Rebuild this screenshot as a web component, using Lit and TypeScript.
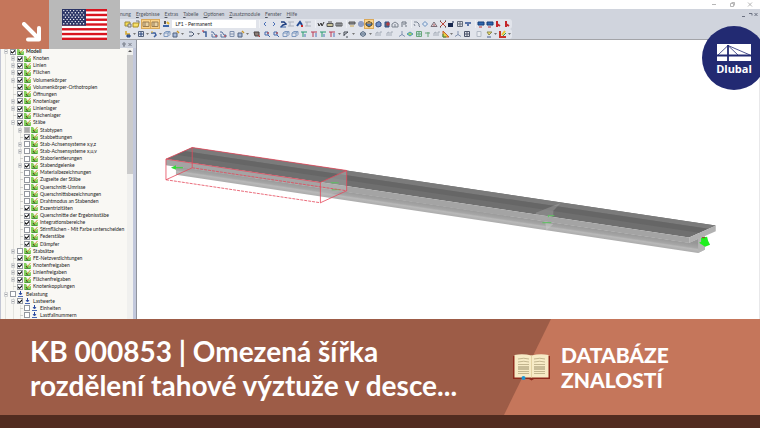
import { LitElement, html, svg, css, nothing } from "lit";
import { customElement } from "lit/decorators.js";
import { styleMap } from "lit/directives/style-map.js";

type Row = [level: number, label: string, state: 0 | 1 | 2, expander: "" | "+" | "-", load?: boolean];

const ROWS: Row[] = [
  [0, "Modell", 1, "-"],
  [1, "Knoten", 1, "+"],
  [1, "Linien", 1, "+"],
  [1, "Flächen", 1, "+"],
  [1, "Volumenkörper", 1, "+"],
  [1, "Volumenkörper-Orthotropien", 1, ""],
  [1, "Öffnungen", 1, ""],
  [1, "Knotenlager", 1, "+"],
  [1, "Linienlager", 1, "+"],
  [1, "Flächenlager", 1, ""],
  [1, "Stäbe", 1, "-"],
  [2, "Stabtypen", 2, "+"],
  [2, "Stabbettungen", 1, ""],
  [2, "Stab-Achsensysteme x,y,z", 0, "+"],
  [2, "Stab-Achsensysteme x,u,v", 0, "+"],
  [2, "Staborientierungen", 0, ""],
  [2, "Stabendgelenke", 1, "+"],
  [2, "Materialbezeichnungen", 0, ""],
  [2, "Zugseite der Stäbe", 0, ""],
  [2, "Querschnitt-Umrisse", 0, ""],
  [2, "Querschnittsbezeichnungen", 0, ""],
  [2, "Drahtmodus an Stabenden", 0, ""],
  [2, "Exzentrizitäten", 1, ""],
  [2, "Querschnitte der Ergebnisstäbe", 1, ""],
  [2, "Integrationsbereiche", 1, ""],
  [2, "Stirnflächen - Mit Farbe unterscheiden", 0, ""],
  [2, "Federstäbe", 1, ""],
  [2, "Dämpfer", 1, ""],
  [1, "Stabsätze", 0, "+"],
  [1, "FE-Netzverdichtungen", 1, ""],
  [1, "Knotenfreigaben", 1, "+"],
  [1, "Linienfreigaben", 1, "+"],
  [1, "Flächenfreigaben", 1, "+"],
  [1, "Knotenkopplungen", 1, ""],
  [0, "Belastung", 0, "-", true],
  [1, "Lastwerte", 1, "-", true],
  [2, "Einheiten", 0, "", true],
  [2, "Lastfallnummern", 0, "", true],
];

const MENU = ["nung", "Ergebnisse", "Extras", "Tabelle", "Optionen", "Zusatzmodule", "Fenster", "Hilfe"];

const p = (d: string, stroke: string, width = 1, fill = "none") =>
  svg`<path d=${d} stroke=${stroke} stroke-width=${width} fill=${fill}></path>`;

const ICONS: Record<string, unknown> = {
  bulb: [p("M1 2h5v4H1z", "#9c8a3d", 1, "#f6dd52"), p("M4 4h3v3H4z", "#777", 1, "#ddd")],
  folder: [p("M1 3h6l-1 4H1z", "#a98d25", 1, "#f8e26b"), p("M4 1h3v2", "#777")],
  win: [p("M1 2h6v4.500H1z", "#9a7d52", 1, "#e9d3a6"), p("M3 2v4", "#9a7d52")],
  user: [p("M3 1v3", "#222", 1.5), p("M1 6h6", "#3b64a8", 2), p("M5 2l2 2", "#e2b32c", 2)],
  left: [p("M5 2L3 4l2 2", "#4a6fb5", 1)],
  right: [p("M3 2l2 2-2 2", "#4a6fb5", 1)],
  blue: [p("M2 2h3l2 2-3 1-2 2", "#1f3f80", 1.5), p("M1 7h6", "#3b64a8", 1)],
  ghost: [p("M1 2h6M1 6h6M3 2v4", "#aab0bb", 1)],
  mark: [p("M1 6l3-4 2 3", "#234a91", 2), p("M5 6h2", "#cc2a2a", 2)],
  glasses: [p("M1 3l1 3 2-3 1 3 2-4", "#333", 1)],
  box: [p("M1 3.500h6v3H1z", "#555", 1, "#cbc59a"), p("M2 2h4", "#555", 1)],
  grid: [p("M1 3h6v3H1z", "#555", 1, "#c5ccd8"), p("M3 3v3M5 3v3", "#555", 1)],
  table: [p("M1 2h6v2H1z", "#555", 1, "#8e9095"), p("M2 6h4", "#c9a44b", 1)],
  gear: [p("M2 2h4v4H2z", "#7787b3", 1, "#dfe4f4"), p("M4 1v6M1 4h6", "#7787b3", 1)],
  cube: [p("M2 3l3-1.500 2 1.500v3L4 7 2 6z", "#334f86", 1, "#718fc2")],
  cubeHot: [p("M1 3l3-1.500 3 1.500v2L4 7 1 5z", "#5b4a22", 1, "#4e78b8"), p("M2 3h4", "#eca02b", 1)],
  cubeRed: [p("M2 2h4v5H2z", "#334f86", 1, "#567"), p("M4 3h2v2H4z", "#c33", 1)],
  house: [p("M1 7V4l3-2 3 2v3zM4 4v3", "#7d848f", 1)],
  flag: [p("M2 7V2h4v2H3M5 6h2", "#6d7480", 1)],
  curve: [p("M1 2h3l2 2v2l1 1", "#7c8593", 1), p("M1 4l1 2", "#7c8593", 1)],
  ring: [p("M4 1.500L6.500 4 4 6.500 1.500 4z", "#688dbd", 1, "#dfe9f5")],
  tri: [p("M1 6.500L4 2l3 4.500z", "#7b6d77", 1), p("M4 4v2", "#b55", 1)],
  cross: [p("M1 1l6 6M7 1L1 7", "#b9493d", 1), p("M1 1h1M6 1h1M1 7h1M6 7h1", "#333", 1)],
  ball: [p("M2 4h3v2H2z", "#16264d", 2, "#16264d"), p("M5 2h2", "#16264d", 1)],
  target: [p("M1.500 1.500h5v5h-5z", "#666e7c", 1), p("M3 3h2v2H3z", "#666e7c", 1)],
  mol: [p("M1 3h6M4 3v3", "#5974a8", 2)],
  screen: [p("M1 2h6v3H1z", "#133d78", 1, "#2c66ae"), p("M2 7h3", "#b33", 1)],
  pdf: [p("M3 1v6M3 4l3 2", "#c3262a", 2)],
  node: [p("M2 1v3h4", "#d5a72d", 1.5), p("M3 5h3v2H3z", "#27457d", 1, "#4970b5")],
  frame: [p("M1.500 1.500h5v5h-5z", "#53627f", 1, "#e5e9f2"), p("M3 3h2v2H3z", "#27457d", 1)],
  swirl: [p("M1 3h4l1 2-2 2", "#3c5f9e", 1.5), p("M1 2h2", "#ddb132", 1)],
  cubeLt: [p("M1 3l2-1.500h4v3L5 6.500H1zM1 3h4v3M5 3l2-1.500", "#7c98bf", 1)],
  edit: [p("M1 3h4v4H1z", "#53627f", 1, "#a7bada"), p("M5 1l2 2", "#c9962b", 1.5)],
  beam: [p("M1 2h3l2 2-2 2H1", "#4d5a72", 1)],
  post: [p("M2 2h3v5", "#3e5f9a", 1.5), p("M1 1h2", "#c33", 1)],
  roof: [p("M1 2h2l2 3h2v2H2V4", "#55709e", 1), p("M5 6h2", "#c33", 1)],
  line: [p("M2 1.500h4v5H2zM2 4h4", "#8091ae", 1)],
  cam: [p("M1 2h5v4H2z", "#464141", 1, "#8d7f79"), p("M5 5l2 2", "#b33", 1)],
  zoom: [p("M2 2h3v3H2zM5 5l2 2", "#4268ab", 1), p("M4 3h2", "#bb3030", 1)],
  axisG: [p("M1 2h6M3 2v5", "#279a70", 1), p("M5 4v3", "#4e72b9", 1)],
  axisR: [p("M1 2h6M3 2v5", "#ba3a55", 1), p("M6 3v4", "#4e72b9", 1)],
  graph: [p("M2 6V2h4M2 5l4-3M4 7h2", "#454a53", 1)],
  globe: [p("M4 1.500L6.500 3v2L4 6.500 1.500 5V3zM2 4h4", "#5d7087", 1, "#afbccc")],
  wave: [p("M1 6V3l2-1v4M5 6V2h2", "#a6adb8", 1)],
  load: [p("M4 1v4M1 6.500l3-2 3 2", "#8393b0", 1)],
  diamond: [p("M1 4l3-2 3 2-3 2z", "#4c9cb8", 1, "#a3cf64")],
  mesh: [p("M1.500 1.500h5v5h-5zM4 2v4M2 4h4", "#69a578", 1, "#c5e0e9")],
  green: [p("M1 3h5M4 2v5", "#68a57a", 1)],
  color: [p("M1 1v6h6z", "#c75b2b", 1, "#e9ce41"), p("M1 4v3h3", "#37a04c", 1)],
  tiles: [p("M1.500 1.500h5v5h-5zM4 1.500v5M1.500 4h5", "#4a5268", 1)],
  disk: [p("M2 1.500h4v5H2z", "#b3bac5", 1, "#e8ebf0")],
  lamp: [p("M2 2h5L4 5z", "#8a8a51", 1, "#f2df67"), p("M2 7h4", "#445b8c", 1)],
  rainbow: [p("M1 1v6h6", "#c93429", 2), p("M3 5l3-4", "#e8c530", 2), p("M4 6l3-3", "#38994c", 1)],
};

/* Each group is [relative width, names]; "v" is a drop-down caret, a leading * marks a pressed tool. */
type Group = [number, string];
const FILE_TOOLS: Group[] = [[16, "bulb folder"], [17, "*win *win"], [8, "user"]];
const VIEW_TOOLS: Group[] = [
  [53, "left right blue ghost mark ghost"],
  [27, "glasses box grid"],
  [62, "table gear *cubeHot cube cubeRed house flag"],
  [62, "curve ring tri cross ball target mol"],
  [35, "screen screen pdf pdf"],
];
const EDIT_TOOLS: Group[] = [
  [60, "node v frame v swirl v cubeLt edit v"],
  [62, "beam v post roof roof line edit v"],
  [102, "cam zoom zoom cubeLt cubeLt axisG axisR axisG axisR v graph v"],
  [35, "globe v wave wave"],
  [74, "load diamond mesh green wave color v load tiles"],
  [36, "disk lamp v rainbow v"],
];

const reset = css`
  :host { display: block; box-sizing: border-box; font-family: Lato, "Liberation Sans", sans-serif; }
  *, *::before { box-sizing: border-box; }
  svg { display: block; }
  button { border: 0; padding: 0; margin: 0; background: none; font: inherit; color: inherit; }
`;

@customElement("tool-bars")
export class ToolBars extends LitElement {
  static styles = [reset, css`
    :host { background: #d0d4dd; padding-left: 120px; height: 31px; border-bottom: 1px solid #a3a4a8; position: relative; }
    nav { display: flex; gap: 5px; height: 10px; align-items: center; color: #50545e; font-size: 5px; line-height: 10px; }
    nav button::first-letter { text-decoration: underline; }
    nav button:first-child::first-letter { text-decoration: none; }
    .bar { display: flex; align-items: center; height: 10px; width: 392px; background: #e1e4eb; border-radius: 0 3px 3px 0; gap: 3px; padding: 0 1px 0 4px; }
    .bar + .bar { gap: 4px; }
    .group { display: flex; justify-content: space-between; flex: 1 1 0; min-width: 0; }
    select ~ .group { padding-left: 1px; border-left: 1px solid #eef0f4; }
    .tool { width: 8px; height: 8px; flex: none; }
    .tool.on { background: #fbd38a; outline: 1px solid #dba95a; }
    .caret { width: 3px; align-self: center; flex: none; }
    select { appearance: none; width: 84px; flex: none; height: 8px; border: 0; padding: 0 3px; background: #fff; color: #222; font: 5px/8px Lato, "Liberation Sans", sans-serif; }
    .mdi { position: absolute; right: 2px; top: 3px; }
  `];

  private group([width, names]: Group) {
    return html`<div class="group" style=${styleMap({ flexGrow: String(width) })}>
      ${names.split(" ").map((n) => {
        if (n === "v") return html`<svg class="caret" viewBox="0 0 3 2"><path d="M0 0h3L1.500 2z" fill="#777"></path></svg>`;
        const on = n[0] === "*";
        const key = on ? n.slice(1) : n;
        return html`<button class="tool ${on ? "on" : ""}" aria-label=${key}><svg viewBox="0 0 8 8">${ICONS[key]}</svg></button>`;
      })}
    </div>`;
  }

  render() {
    return html`
      <nav>${MENU.map((m) => html`<button>${m}</button>`)}</nav>
      <div class="bar">
        ${FILE_TOOLS.map((g) => this.group(g))}
        <select aria-label="Lastfall"><option>LF1 - Permanent</option></select>
        ${VIEW_TOOLS.map((g) => this.group(g))}
      </div>
      <div class="bar">${EDIT_TOOLS.map((g) => this.group(g))}</div>
      <svg class="mdi" width="16" height="6" viewBox="0 0 16 6" fill="none" stroke="#6b7080">
        <path d="M0 4.500h3M7 1.500h3v2M12.500 1l3 3M15.500 1l-3 3"></path>
      </svg>`;
  }
}

@customElement("model-tree")
export class ModelTree extends LitElement {
  static styles = [reset, css`
    :host { display: flex; flex-direction: column; width: 137px; flex: none; background: #f9f8f4; border-right: 1px solid #8f939c; min-height: 0; }
    header { display: flex; justify-content: flex-end; align-items: center; height: 8px; flex: none; padding-right: 4px; background: #cdd3df; }
    .body { display: flex; flex: 1; min-height: 0; border-left: 1px solid #c3c6d4; border-right: 3px solid #c2c8dc; }
    ul { list-style: none; margin: 0; padding: 0; flex: 1; display: grid; grid-auto-rows: 1fr; min-width: 0; }
    li { display: flex; align-items: center; min-height: 0; padding-left: 2px; font-size: 5px; line-height: 7px; color: #222; white-space: nowrap;
      background: linear-gradient(#e4e4df, #e4e4df) 4px 0 / 1px 100% no-repeat; }
    .l1 { padding-left: 9px; background: linear-gradient(#e4e4df, #e4e4df) 4px 0 / 1px 100% no-repeat, linear-gradient(#e4e4df, #e4e4df) 12px 0 / 1px 100% no-repeat; }
    .l2 { padding-left: 16px; background: linear-gradient(#e4e4df, #e4e4df) 4px 0 / 1px 100% no-repeat, linear-gradient(#e4e4df, #e4e4df) 12px 0 / 1px 100% no-repeat, linear-gradient(#e4e4df, #e4e4df) 19px 0 / 1px 100% no-repeat; }
    .exp { width: 6px; height: 5px; flex: none; margin-right: 1px; }
    label { display: flex; align-items: center; gap: 1px; }
    .root { font-weight: bold; }
    input { appearance: none; margin: 0; width: 6px; height: 6px; border: 1px solid #94989f; background: #fff; flex: none; }
    input:checked::before { content: ""; display: block; height: 4px; background: #111; clip-path: polygon(0 35%, 40% 65%, 100% 0, 100% 45%, 40% 100%, 0 80%); }
    .mixed { background: #aaa; border-color: #bbb; }
    .pic { width: 7px; height: 6px; flex: none; margin-right: 1px; }
    .scroll { width: 6px; flex: none; background: #f0f0ee; display: flex; flex-direction: column; }
    .up { width: 6px; height: 7px; }
    .thumb { height: 44%; background: #cbcbcb; }
  `];

  render() {
    return html`
      <header><svg width="10" height="5" viewBox="0 0 10 5" fill="none" stroke="#777c88"><path d="M1 1h2v2H1zM2 3v2M6.500 1l3 3M9.500 1l-3 3"></path></svg></header>
      <div class="body">
        <ul>${ROWS.map(([level, label, state, exp, load]) => html`
          <li class="l${level}">
            <svg class="exp" viewBox="0 0 6 5" fill="none">
              ${exp
                ? svg`<path d="M1.500 .5h3v4h-3z" stroke="#cfd0d2" fill="#f3f3f0"></path><path d=${exp === "+" ? "M2 2.500h2M3 1.500v2" : "M2 2.500h2"} stroke="#a2a4a8"></path>`
                : level ? svg`<path d="M3 2.500h3" stroke="#d0d0cc"></path>` : nothing}
            </svg>
            <label class=${label === "Modell" ? "root" : ""}>
              <input type="checkbox" class=${state === 2 ? "mixed" : ""} .checked=${state === 1}>
              <svg class="pic" viewBox="0 0 7 6" fill="none">
                ${load
                  ? svg`<path d="M3.500 0v3M2 2l1.500 2L5 2" stroke="#2747a0"></path><path d="M1 5.500h5" stroke="#4a69b5"></path>`
                  : svg`<path d="M0 0h2l2 3 3-1v4H0z" fill="#86d05e"></path><path d="M1 5.500h5" stroke="#4e9a3f"></path><path d="M3 4l3.500-4" stroke="#c8962f"></path><path d="M2 3l1.500 2" stroke="#3a4a24"></path>`}
              </svg>
              <span>${label}</span>
            </label>
          </li>`)}
        </ul>
        <div class="scroll"><svg class="up" viewBox="0 0 6 7"><path d="M1 4l2-2 2 2z" fill="#555"></path></svg><div class="thumb"></div></div>
      </div>`;
  }
}

@customElement("beam-view")
export class BeamView extends LitElement {
  static styles = [reset, css`
    :host { flex: 1; min-width: 0; background: #fff; border-right: 1px solid #e8e8ea; overflow: hidden; }
    svg { width: 100%; }
  `];

  render() {
    return html`<svg viewBox="137 40 623 279" role="img" aria-label="Träger">
      <defs>
        <linearGradient id="web" gradientUnits="userSpaceOnUse" x1="400" y1="199" x2="398.500" y2="209">
          <stop offset="0" stop-color="#979797"></stop><stop offset=".45" stop-color="#a6a6a6"></stop><stop offset=".6" stop-color="#b9b9b9"></stop><stop offset="1" stop-color="#a9a9a9"></stop>
        </linearGradient>
      </defs>
      <path d="M176 166.500L690 243l9-4 6.700-2v13l-6.700 3.300L176 175z" fill="url(#web)"></path>
      <path d="M699 239l6.700-3v14l-6.700 3.300z" fill="#b4b4b4"></path>
      <path d="M166 159.300L192.300 147.700 716.700 225.700 690 237.700z" fill="#6f6f6f"></path>
      <path d="M192.300 147.700L716.700 225.700 709 229 184 151.300z" fill="#7b7b7b"></path>
      <path d="M184 151.300L709 229 700 233 176 155z" fill="#666"></path>
      <path d="M166 159.300L690 237.700v5.600L166 165.500z" fill="#a4a4a4"></path>
      <path d="M690 237.700l26.700-12v5.800l-26.700 11.800z" fill="#b1b1b1"></path>
      <path d="M554 211l7.700-8L536.500 213v6l10 1.500 7.500-4z" fill="#aaa" fill-opacity=".4"></path>
      <path d="M546 223l8 1.200-7 6.500z" fill="#ccc" fill-opacity=".5"></path>
      <path d="M320.700 182.700L347 170.700v20l-26.300 6z" fill="#bbb" fill-opacity=".4"></path>
      <path d="M171 168l5-2.500v2h7v1h-7v1.500z" fill="#2fdc32"></path>
      <path d="M331 183h8M332 190h8M549 216h6M543 223h9M549 215.500v2" stroke="#5bc45e" fill="none"></path>
      <path d="M702 238l6-1 1 4 2 4-5 2-6-4 2-1z" fill="#20ef20"></path>
      <path d="M703 238h3" stroke="#914322"></path>
      <path d="M192.300 147.700L347 170.700 320.700 182.700 166 159.300zM166 159.300V180M192.300 147.700V168M347 170.700V191M320.700 182.700V203M166 180l26.300-12M320.700 203L347 191" fill="none" stroke="#e4475a" stroke-width=".8"></path>
      <path d="M166 180L320.700 203M192.300 168L347 191" fill="none" stroke="#e4475a" stroke-width=".8" stroke-dasharray="3 1"></path>
    </svg>`;
  }
}

@customElement("app-root")
export class AppRoot extends LitElement {
  static styles = [reset, css`
    :host { display: flex; flex-direction: column; height: 100vh; position: relative; overflow: hidden; background: #fff; }
    .titlebar { height: 9px; flex: none; display: flex; justify-content: flex-end; padding: 1px 6px 0; }
    .work { display: flex; flex: 1; min-height: 0; overflow: hidden; }
    .corner { position: absolute; left: 0; top: 0; display: flex; height: 49px; }
    .go { width: 49px; background: #c5765b; display: flex; align-items: flex-end; justify-content: flex-end; padding: 0 7px 7px 0; }
    .lang { width: 71px; background: #b9b9b9; display: flex; justify-content: center; padding-top: 9px; }
    .brand { position: absolute; right: -6px; top: 26px; width: 64px; height: 64px; border-radius: 50%; background: #222a72; color: #fff;
      display: flex; flex-direction: column; align-items: center; padding-top: 18px; font: bold 11px/13px "Open Sans", "Noto Sans", sans-serif; text-decoration: none; }
    .banner { display: flex; flex: none; min-height: 96px; background: #9d5c47; color: #fff; }
    h1 { flex: 1; margin: 0; padding: 15px 0 13px 30px; font-size: 28px; line-height: 34px; font-weight: 700; white-space: nowrap; }
    .kind { position: relative; width: 256px; flex: none; display: flex; align-items: center; gap: 11px; padding-left: 9px; }
    .kind::before { content: ""; position: absolute; inset: 0; background: #c5765b; clip-path: polygon(47px 0, 100% 0, 100% 100%, 0 100%); }
    .book, .kind p { position: relative; }
    .kind p { margin: 0; font-size: 21px; line-height: 25px; font-weight: 900; }
    .strip { height: 13px; flex: none; background: #522c20; }
  `];

  private flag() {
    const stars: unknown[] = [];
    for (let r = 0; r < 7; r++)
      for (let c = 0; c < (r % 2 ? 6 : 7); c++)
        stars.push(svg`<circle cx=${1.8 + c * 3.3 + (r % 2 ? 1.65 : 0)} cy=${1.6 + r * 2.2} r=".7" fill="#fff"></circle>`);
    return html`<svg width="45" height="31" viewBox="0 0 45 31" role="img" aria-label="English">
      <rect width="45" height="31" fill="#fff"></rect>
      ${[0, 1, 2, 3, 4, 5, 6].map((i) => svg`<rect y=${i * 4.77} width="45" height="2.38" fill="#d9141f"></rect>`)}
      <rect width="24" height="16.700" fill="#2b3566"></rect>${stars}
    </svg>`;
  }

  private book() {
    return html`<svg class="book" width="37" height="28" viewBox="0 0 37 28">
      <path d="M0 3h37v23H21l-2.500 1.500L16 26H0z" fill="#8e2a1d"></path>
      <path d="M1.500 2Q10 .5 18.500 2.500 27 .5 35.500 2v22.500H1.500z" fill="#f7ebc6"></path>
      <path d="M18.500 2.500v22" stroke="#e3d2a3"></path>
      <path d="M5 6q6-1.500 11 0M5 9q6-1.500 11 0M21 6q6-1.500 11 0M21 9q6-1.500 11 0M5 11.500h11M21 11.500h11M5 18.500h11M21 18.500h11M5 20.500h11M21 20.500h11" stroke="#c3b68f" fill="none"></path>
      <path d="M5 13h11v4H5zM21 13h11v4H21z" fill="#c9bd98"></path>
      <circle cx="10.500" cy="25" r="2" fill="#1b96d3"></circle>
    </svg>`;
  }

  render() {
    return html`
      <div class="titlebar">
        <svg width="44" height="7" viewBox="0 0 44 7" fill="none" stroke="#a5a5a5" stroke-width=".8"><path d="M2 3.500h4M20.500 2.500h3v3h-3zM21.500 1.500h3v3M38 1.500l4 4M42 1.500l-4 4"></path></svg>
      </div>
      <tool-bars></tool-bars>
      <div class="work"><model-tree></model-tree><beam-view></beam-view></div>
      <footer>
        <div class="banner">
          <h1>KB 000853 | Omezená šířka<br>rozdělení tahové výztuže v desce...</h1>
          <div class="kind">${this.book()}<p>DATABÁZE<br>ZNALOSTÍ</p></div>
        </div>
        <div class="strip"></div>
      </footer>
      <div class="corner">
        <div class="go"><svg width="20" height="20" viewBox="0 0 20 20" fill="none" stroke="#fff" stroke-width="4" stroke-linecap="round" stroke-linejoin="round"><path d="M2 2L17 17M17 6V17.500H6"></path></svg></div>
        <div class="lang">${this.flag()}</div>
      </div>
      <a class="brand" href="#">
        <svg width="34" height="18" viewBox="0 0 34 18">
          <path d="M0 0h34v17H0z" fill="#fff"></path>
          <path d="M0 11.500h34M11 1v16" stroke="#222a72" stroke-width="1.800"></path>
          <path d="M1 11L11 1.500 21 11M11 1.500L33 11" fill="none" stroke="#222a72" stroke-width=".8"></path>
        </svg>
        <span>Dlubal</span>
      </a>`;
  }
}
